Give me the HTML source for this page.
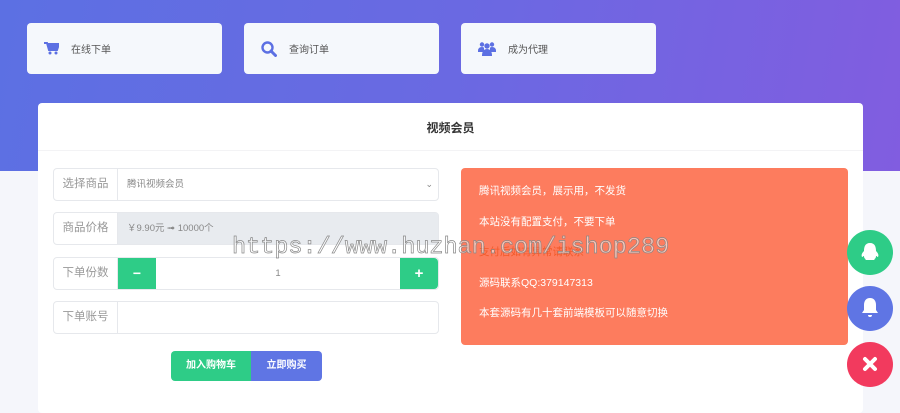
<!DOCTYPE html>
<html><head><meta charset="utf-8"><style>
*{box-sizing:border-box;margin:0;padding:0}
body{width:900px;height:407px;overflow:hidden;background:#f5f6fb;font-family:"Liberation Sans","Noto Sans CJK SC",sans-serif;position:relative}
.hdr{position:absolute;left:0;top:0;width:900px;height:171px;background:linear-gradient(100deg,#5c70e3 0%,#6a69e2 50%,#815de0 100%)}
.nav{position:absolute;top:23px;width:195px;height:51px;background:#f5f8fc;border-radius:4px;display:flex;align-items:center;font-size:10px;color:#555}
.nav svg{margin:0 12px 0 17px}
.card{position:absolute;left:38px;top:103px;width:825px;height:310px;background:#fff;border-radius:4px}
.title{position:absolute;left:0;top:0;width:825px;height:48px;border-bottom:1px solid #f3f3f5;text-align:center;line-height:50px;font-size:12px;font-weight:bold;color:#333}
.row{position:absolute;left:53px;width:386px;height:33px;border:1px solid #e6e8ec;border-radius:4px;display:flex;font-size:11px}
.lab{width:64px;border-right:1px solid #e6e8ec;color:#999;line-height:31px;text-align:center;font-size:11.5px}
.val{flex:1;line-height:31px;padding-left:9px;color:#888;font-size:9.5px}
.btn{position:absolute;top:351px;height:30px;line-height:30px;color:#fff;font-size:10px;font-weight:bold;text-align:center}
.panel{position:absolute;left:461px;top:168px;width:387px;height:177px;background:#fd7c5e;border-radius:4px;color:#fff;font-size:10.5px;padding:15px 0 0 18px}
.panel p{height:30.5px}
.fab{position:absolute;left:847px;width:46px;height:45px;border-radius:50%}
.wm{position:absolute;left:232px;top:234px;font-family:"Liberation Mono",monospace;font-size:23.5px;color:rgba(255,255,255,.55);-webkit-text-stroke:.7px #888}
</style></head><body>
<div class="hdr"></div>
<div class="nav" style="left:27px"><svg width="15" height="13" viewBox="0 0 15 13"><path d="M0 1h3l2 7h8l2-6H4" fill="none" stroke="#5c70e3" stroke-width="2"/><path d="M4 2h11l-2 6H5z" fill="#5c70e3"/><circle cx="6" cy="11" r="1.5" fill="#5c70e3"/><circle cx="12" cy="11" r="1.5" fill="#5c70e3"/></svg>在线下单</div>
<div class="nav" style="left:244px"><svg width="16" height="16" viewBox="0 0 16 16"><circle cx="6.5" cy="6.5" r="5" fill="none" stroke="#5c70e3" stroke-width="2.4"/><path d="M10 10l4.5 4.5" stroke="#5c70e3" stroke-width="3" stroke-linecap="round"/></svg>查询订单</div>
<div class="nav" style="left:461px"><svg width="18" height="15" viewBox="0 0 18 15"><g fill="#5c70e3"><circle cx="4" cy="3.5" r="2.2"/><circle cx="14" cy="3.5" r="2.2"/><circle cx="9" cy="5" r="2.7"/><path d="M0 10q0-4 4-4 2 0 2 1v4H0z"/><path d="M18 10q0-4-4-4-2 0-2 1v4h6z"/><path d="M4 15q0-7 5-7t5 7z"/></g></svg>成为代理</div>
<div class="card"><div class="title">视频会员</div></div>
<div class="row" style="top:168px"><div class="lab">选择商品</div><div class="val" style="position:relative">腾讯视频会员<span style="position:absolute;right:5px;top:0;font-size:9px">⌄</span></div></div>
<div class="row" style="top:212px"><div class="lab">商品价格</div><div class="val" style="background:#e8ebef">￥9.90元 ➟ 10000个</div></div>
<div class="row" style="top:257px"><div class="lab">下单份数</div><div style="width:38px;background:#2ecc87;color:#fff;text-align:center;line-height:31px;font-weight:bold;font-size:14px">−</div><div class="val" style="text-align:center;padding:0">1</div><div style="width:38px;background:#2ecc87;color:#fff;text-align:center;line-height:31px;font-weight:bold;font-size:15px;border-radius:0 4px 4px 0">+</div></div>
<div class="row" style="top:301px"><div class="lab">下单账号</div><div class="val"></div></div>
<div class="btn" style="left:171px;width:80px;background:#2ecc87;border-radius:4px 0 0 4px">加入购物车</div>
<div class="btn" style="left:251px;width:71px;background:#5f75e4;border-radius:0 4px 4px 0">立即购买</div>
<div class="panel"><p>腾讯视频会员，展示用，不发货</p><p>本站没有配置支付，不要下单</p><p style="color:#f25a2a">支付后如有异常请联系</p><p>源码联系QQ:379147313</p><p>本套源码有几十套前端模板可以随意切换</p></div>
<div class="fab" style="top:230px;background:#2ecc87"><svg width="46" height="45" viewBox="0 0 46 45"><path d="M23 13c-5 0-6 4-6 8-2 2-3 4-2 6 1 0 1-1 2-1 0 2 1 3 2 3-1 1-1 1 0 1h8c1 0 1 0 0-1 1 0 2-1 2-3 1 0 1 1 2 1 1-2 0-4-2-6 0-4-1-8-6-8z" fill="#fff"/></svg></div>
<div class="fab" style="top:286px;background:#5f75e4"><svg width="46" height="45" viewBox="0 0 46 45"><path d="M23 12c-4 0-6 3-6 7v5l-2 3h16l-2-3v-5c0-4-2-7-6-7z M21 29a2 2 0 0 0 4 0z" fill="#fff"/></svg></div>
<div class="fab" style="top:342px;background:#f23a5e"><svg width="46" height="45" viewBox="0 0 46 45"><path d="M18 17l10 10M28 17L18 27" stroke="#fff" stroke-width="4" stroke-linecap="round"/></svg></div>
<div class="wm">https://www.huzhan.com/ishop289</div>
</body></html>
